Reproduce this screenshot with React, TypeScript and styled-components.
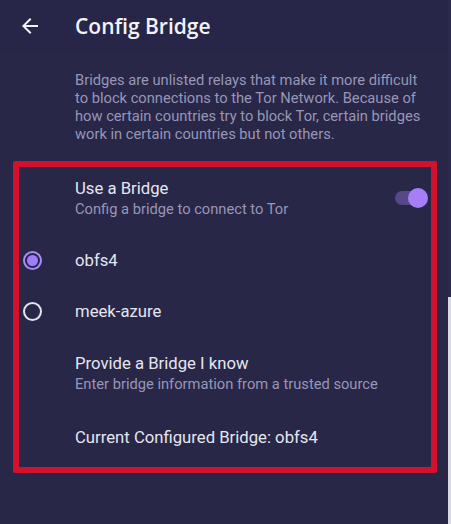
import React from "react";
import styled, { createGlobalStyle } from "styled-components";

const Global = createGlobalStyle`
  html, body { margin: 0; padding: 0; background: #282748; }
  body { font-family: Roboto, "Liberation Sans", sans-serif; }
  #root { min-height: 524px; }
`;

const Page = styled.div`
  display: flex;
  width: 451px;
  min-height: 524px;
  background: #282748;
`;

const Main = styled.div`
  flex: 1;
  display: flex;
  flex-direction: column;
`;

const EdgeStrip = styled.div`
  width: 3px;
  display: flex;
  flex-direction: column;
  padding-top: 297px;
  background: #2b2a4c;
  &::after {
    content: "";
    flex: 1;
    background: #d9d9e2;
  }
`;

const Header = styled.header`
  height: 52px;
  display: flex;
  align-items: center;
  padding-left: 18px;
  background: #272648;
`;

const BackButton = styled.button`
  width: 24px;
  height: 24px;
  padding: 0;
  border: 0;
  background: none;
  color: #f2f2f7;
  display: flex;
  margin-right: 33px;
  svg { width: 24px; height: 24px; fill: currentColor; }
`;

const Title = styled.h1`
  margin: 0 0 1px;
  font-family: "Open Sans", Roboto, sans-serif;
  font-weight: 600;
  font-size: 21px;
  color: #f3f3f8;
`;

const Description = styled.p`
  margin: 0;
  padding: 19px 0 0 75px;
  width: 348px;
  font-size: 14.7px;
  line-height: 18px;
  color: #9896b6;
`;

const Highlight = styled.section`
  box-sizing: border-box;
  margin: 18px 0 0 13px;
  width: 424px;
  height: 312px;
  border: 6px solid #d3112e;
  border-radius: 2px;
  display: flex;
  flex-direction: column;
`;

const Row = styled.div<{ $h: number }>`
  height: ${(p) => p.$h}px;
  display: grid;
  grid-template-columns: 56px 1fr auto;
  align-items: center;
`;

const IconCell = styled.div`
  padding-left: 4px;
  display: flex;
  align-items: center;
`;

const TextCell = styled.div`
  display: flex;
  flex-direction: column;
`;

const RowTitle = styled.div`
  font-size: 16.7px;
  line-height: 21px;
  color: #e6e6ef;
`;

const RowSub = styled.div`
  font-size: 14.7px;
  line-height: 20px;
  color: #9896b6;
`;

const Radio = styled.span<{ $checked?: boolean }>`
  box-sizing: border-box;
  width: 19px;
  height: 19px;
  border-radius: 50%;
  border: 2px solid ${(p) => (p.$checked ? "#a98cf6" : "#e4e4ec")};
  display: flex;
  align-items: center;
  justify-content: center;
  &::after {
    content: "";
    width: 11px;
    height: 11px;
    border-radius: 50%;
    background: ${(p) => (p.$checked ? "#a07cfa" : "transparent")};
  }
`;

const Switch = styled.span`
  position: relative;
  width: 33px;
  height: 20px;
  margin-right: 3px;
  display: flex;
  align-items: center;
  &::before {
    content: "";
    width: 30px;
    height: 14px;
    border-radius: 7px;
    background: #55498a;
  }
  &::after {
    content: "";
    position: absolute;
    right: 0;
    top: 0;
    width: 20px;
    height: 20px;
    border-radius: 50%;
    background: #a47ff7;
  }
`;

export default function App() {
  return (
    <>
      <Global />
      <Page>
        <Main>
          <Header>
            <BackButton aria-label="Back">
              <svg viewBox="0 0 24 24">
                <path d="M20 11H7.83l5.59-5.59L12 4l-8 8 8 8 1.41-1.41L7.83 13H20v-2z" />
              </svg>
            </BackButton>
            <Title>Config Bridge</Title>
          </Header>
          <Description>
            Bridges are unlisted relays that make it more difficult to block
            connections to the Tor Network. Because of how certain countries try
            to block Tor, certain bridges work in certain countries but not
            others.
          </Description>
          <Highlight>
            <Row $h={62}>
              <IconCell />
              <TextCell>
                <RowTitle>Use a Bridge</RowTitle>
                <RowSub>Config a bridge to connect to Tor</RowSub>
              </TextCell>
              <Switch />
            </Row>
            <Row $h={62}>
              <IconCell>
                <Radio $checked />
              </IconCell>
              <TextCell>
                <RowTitle>obfs4</RowTitle>
              </TextCell>
            </Row>
            <Row $h={40}>
              <IconCell>
                <Radio />
              </IconCell>
              <TextCell>
                <RowTitle>meek-azure</RowTitle>
              </TextCell>
            </Row>
            <Row $h={85}>
              <IconCell />
              <TextCell>
                <RowTitle>Provide a Bridge I know</RowTitle>
                <RowSub>Enter bridge information from a trusted source</RowSub>
              </TextCell>
            </Row>
            <Row $h={42}>
              <IconCell />
              <TextCell>
                <RowTitle>Current Configured Bridge: obfs4</RowTitle>
              </TextCell>
            </Row>
          </Highlight>
        </Main>
        <EdgeStrip />
      </Page>
    </>
  );
}
